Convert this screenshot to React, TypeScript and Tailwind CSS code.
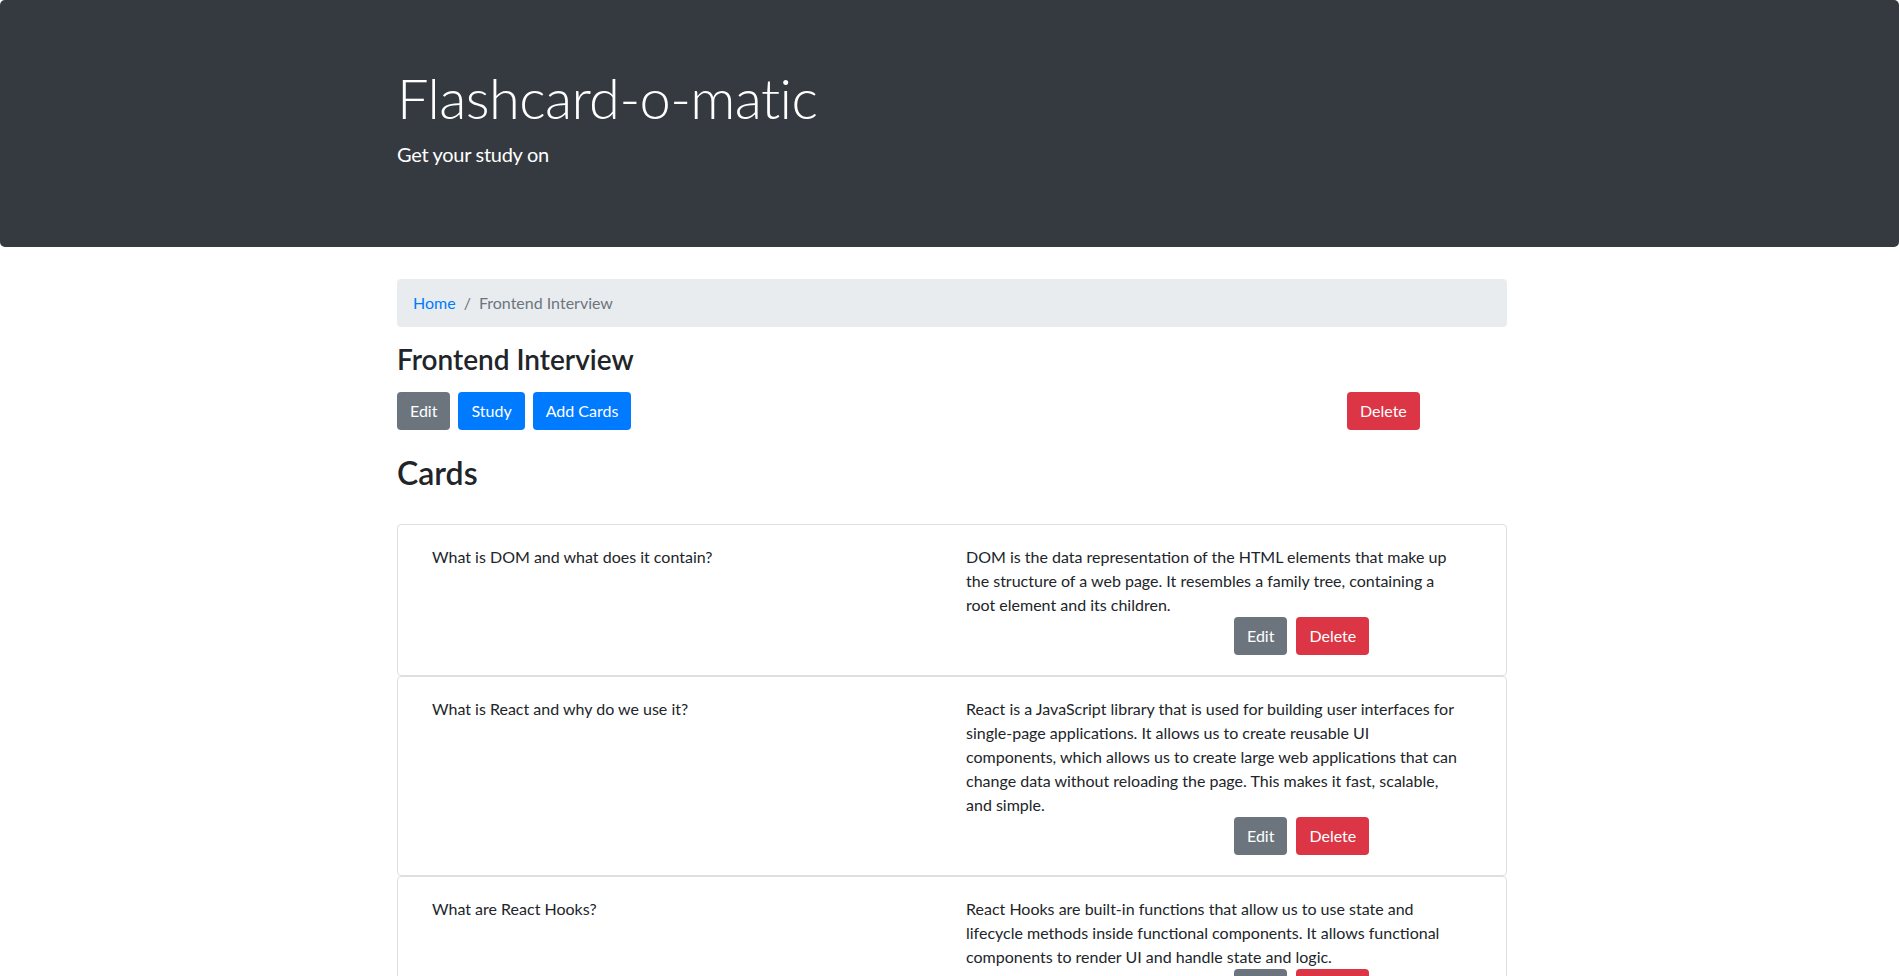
import React from "react";

const cards = [
  {
    q: "What is DOM and what does it contain?",
    a: [
      "DOM is the data representation of the HTML elements that make up",
      "the structure of a web page. It resembles a family tree, containing a",
      "root element and its children.",
    ],
  },
  {
    q: "What is React and why do we use it?",
    a: [
      "React is a JavaScript library that is used for building user interfaces for",
      "single-page applications. It allows us to create reusable UI",
      "components, which allows us to create large web applications that can",
      "change data without reloading the page. This makes it fast, scalable,",
      "and simple.",
    ],
  },
  {
    q: "What are React Hooks?",
    a: [
      "React Hooks are built-in functions that allow us to use state and",
      "lifecycle methods inside functional components. It allows functional",
      "components to render UI and handle state and logic.",
    ],
  },
];

const btn =
  "inline-block px-3 py-1.5 border border-transparent text-base leading-6 rounded text-white";

export default function App() {
  return (
    <div
      className="min-h-screen bg-white text-[#212529]"
      style={{ fontFamily: "Lato, 'Noto Sans', sans-serif" }}
    >
      <div className="bg-[#343a40] text-white rounded-[5px] pt-16 pb-[62px] mb-8">
        <div className="flex justify-center pl-[5px]">
          <div className="w-[1110px]">
            <h1 className="text-[56px] font-light leading-[1.2] tracking-[-0.6px] mb-2">Flashcard-o-matic</h1>
            <p className="text-[20px] font-normal leading-[1.5] tracking-[-0.3px] mb-4">Get your study on</p>
          </div>
        </div>
      </div>

      <div className="flex justify-center pl-[5px]">
        <div className="w-[1110px]">
          <nav className="bg-[#e9ecef] rounded px-4 py-3 text-base leading-6 mb-4 flex">
            <span className="text-[#007bff]">Home</span>
            <span className="text-[#6c757d] px-2">/</span>
            <span className="text-[#6c757d]">Frontend Interview</span>
          </nav>

          <h3 className="text-[28px] font-semibold leading-[1.2] mb-[15px]">Frontend Interview</h3>

          <div className="flex mb-6">
            <div className="w-[950px] flex gap-2">
              <button className={`${btn} bg-[#6c757d]`}>Edit</button>
              <button className={`${btn} bg-[#007bff]`}>Study</button>
              <button className={`${btn} bg-[#007bff]`}>Add Cards</button>
            </div>
            <button className={`${btn} bg-[#dc3545]`}>Delete</button>
          </div>

          <h2 className="text-[32px] font-semibold leading-[1.2] mb-8">Cards</h2>

          <div className="flex flex-col">
            {cards.map((c) => (
              <div key={c.q} className="border border-[#dfdfdf] rounded p-5 flex text-base leading-6">
                <div className="w-[548px] pl-[14px]">{c.q}</div>
                <div className="w-[500px] flex flex-col">
                  <p>
                    {c.a.map((l) => (
                      <span key={l} className="block whitespace-nowrap">
                        {l}
                      </span>
                    ))}
                  </p>
                  <div className="flex gap-[9px] pl-[268px]">
                    <button className={`${btn} bg-[#6c757d]`}>Edit</button>
                    <button className={`${btn} bg-[#dc3545]`}>Delete</button>
                  </div>
                </div>
              </div>
            ))}
          </div>
        </div>
      </div>
    </div>
  );
}
